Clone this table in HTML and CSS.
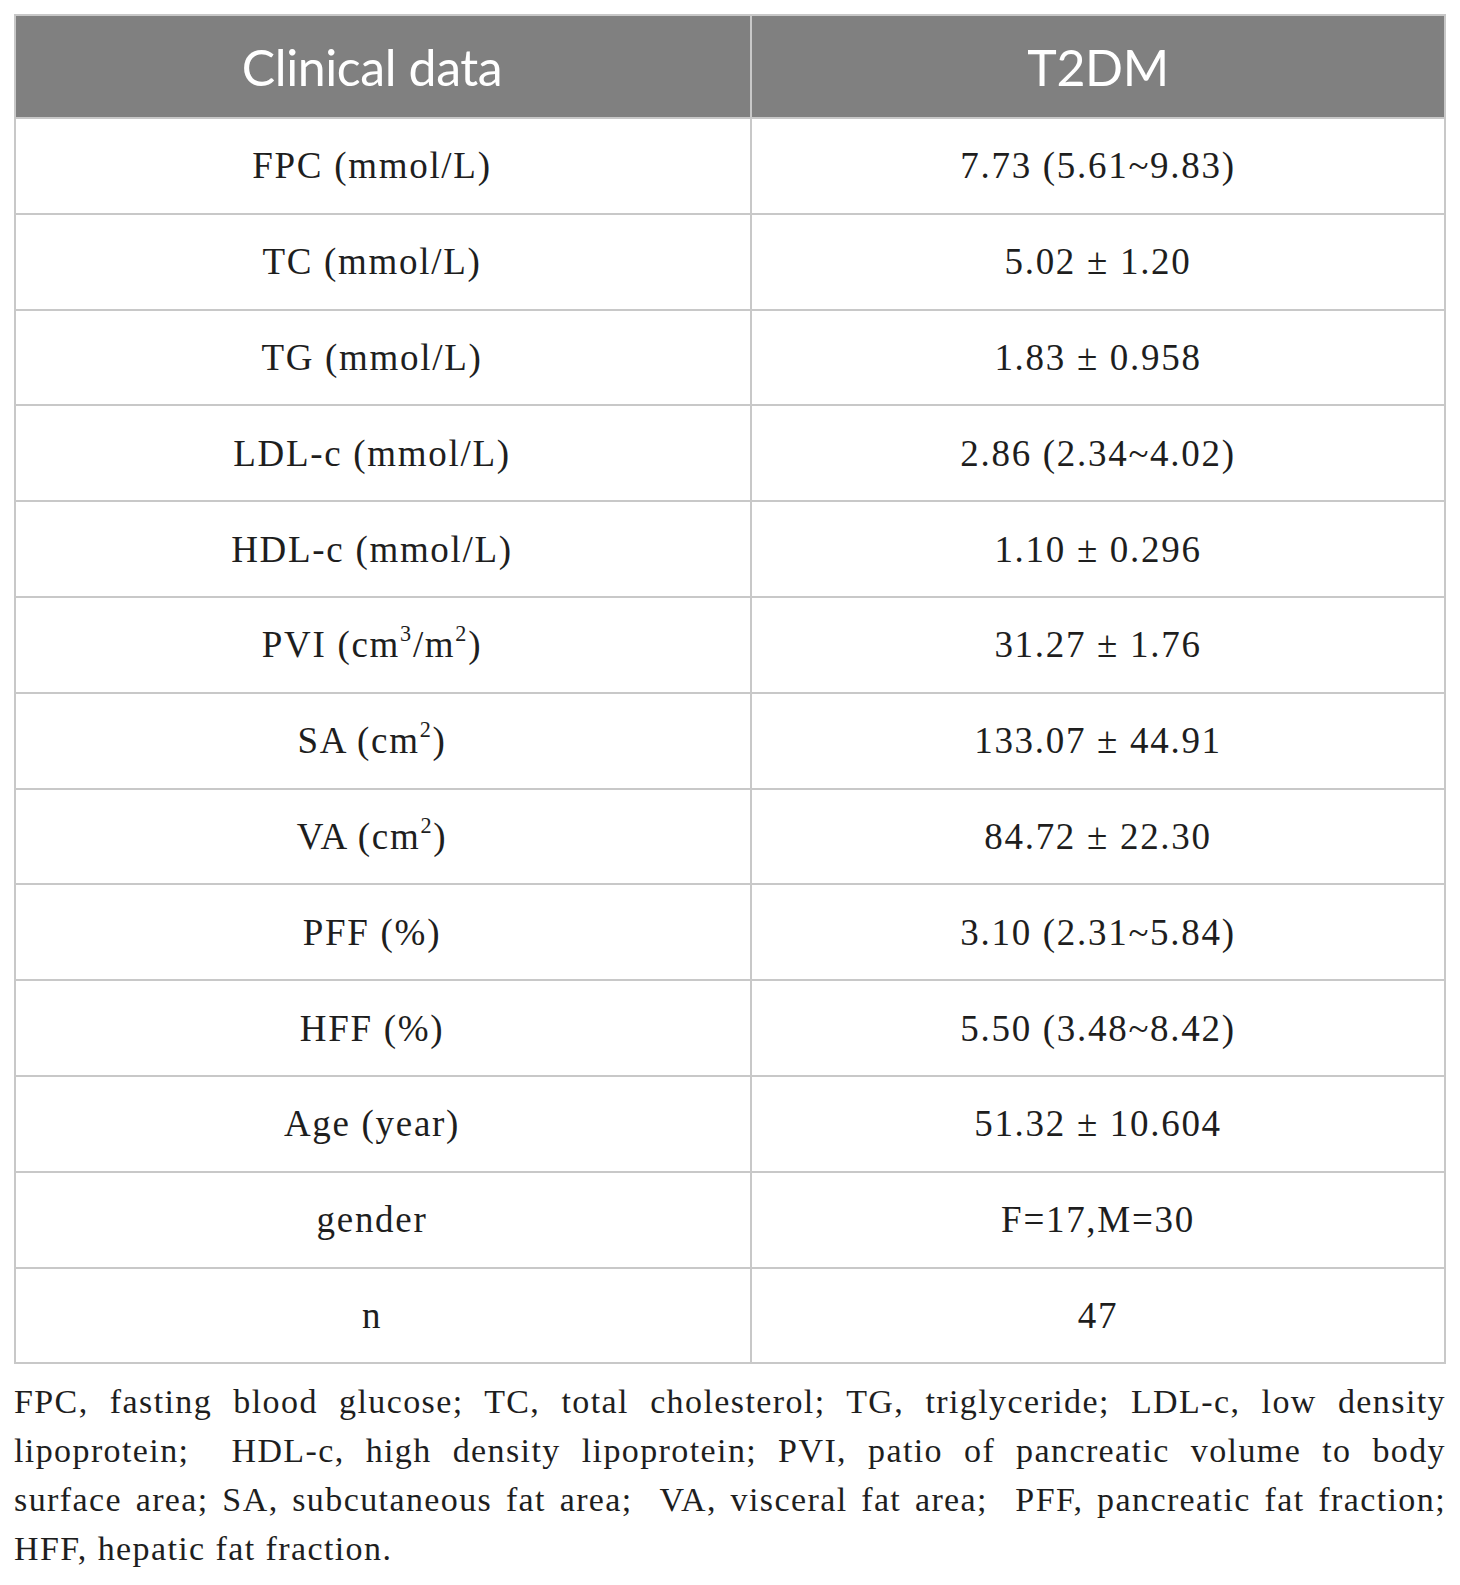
FILE: index.html
```html
<!DOCTYPE html>
<html lang="en">
<head>
    <meta charset="UTF-8">
    <title>Clinical data of T2DM patients</title>
    <link rel="stylesheet" href="styles.css">
</head>
<body>
    <div class="page">
        <table class="data-table">
            <thead>
                <tr>
                    <th class="col-label">Clinical data</th>
                    <th class="col-value">T2DM</th>
                </tr>
            </thead>
            <tbody>
                <tr><td class="col-label">FPC (mmol/L)</td><td class="col-value">7.73 (5.61~9.83)</td></tr>
                <tr><td class="col-label">TC (mmol/L)</td><td class="col-value">5.02 ± 1.20</td></tr>
                <tr><td class="col-label">TG (mmol/L)</td><td class="col-value">1.83 ± 0.958</td></tr>
                <tr><td class="col-label">LDL-c (mmol/L)</td><td class="col-value">2.86 (2.34~4.02)</td></tr>
                <tr><td class="col-label">HDL-c (mmol/L)</td><td class="col-value">1.10 ± 0.296</td></tr>
                <tr><td class="col-label">PVI (cm<sup>3</sup>/m<sup>2</sup>)</td><td class="col-value">31.27 ± 1.76</td></tr>
                <tr><td class="col-label">SA (cm<sup>2</sup>)</td><td class="col-value">133.07 ± 44.91</td></tr>
                <tr><td class="col-label">VA (cm<sup>2</sup>)</td><td class="col-value">84.72 ± 22.30</td></tr>
                <tr><td class="col-label">PFF (%)</td><td class="col-value">3.10 (2.31~5.84)</td></tr>
                <tr><td class="col-label">HFF (%)</td><td class="col-value">5.50 (3.48~8.42)</td></tr>
                <tr><td class="col-label">Age (year)</td><td class="col-value">51.32 ± 10.604</td></tr>
                <tr><td class="col-label">gender</td><td class="col-value">F=17,M=30</td></tr>
                <tr><td class="col-label">n</td><td class="col-value">47</td></tr>
            </tbody>
        </table>

        <div class="footnote">
            <span class="line">FPC, fasting blood glucose; TC, total cholesterol; TG, triglyceride; LDL-c, low density</span>
            <span class="line">lipoprotein;&nbsp; HDL-c, high density lipoprotein; PVI, patio of pancreatic volume to body</span>
            <span class="line">surface area; SA, subcutaneous fat area;&nbsp; VA, visceral fat area;&nbsp; PFF, pancreatic fat fraction;</span>
            <span class="line last">HFF, hepatic fat fraction.</span>
        </div>
    </div>
</body>
</html>
```

FILE: styles.css
```css
body {
    margin: 0;
    background: #ffffff;
    color: #1e1e1e;
    font-family: 'Liberation Serif', 'Times New Roman', serif;
}

.page {
    padding: 14px 14px 20px 14px;
}

.data-table {
    width: 100%;
    border-collapse: collapse;
    border: 2px solid #c8c8c8;
}

.data-table th {
    height: 101px;
    padding: 0;
    background: #808080;
    color: #ffffff;
    font-family: Lato, 'Liberation Sans', sans-serif;
    font-weight: normal;
    font-size: 50px;
    letter-spacing: -0.4px;
    border: 2px solid #c8c8c8;
    text-align: center;
}

.data-table td {
    height: 93.8px;
    padding: 0;
    font-size: 37px;
    letter-spacing: 1.7px;
    border: 2px solid #c8c8c8;
    text-align: center;
}

.col-label {
    width: 736px;
    padding-right: 22px !important;
    box-sizing: border-box;
}

sup {
    font-size: 0.6em;
    line-height: 0;
    vertical-align: 0.7em;
}

.footnote {
    margin-top: 13px;
    font-size: 34px;
    letter-spacing: 1.4px;
    line-height: 49px;
}

.footnote .line {
    display: block;
    text-align: justify;
    text-align-last: justify;
}

.footnote .line.last {
    text-align-last: left;
}
```
